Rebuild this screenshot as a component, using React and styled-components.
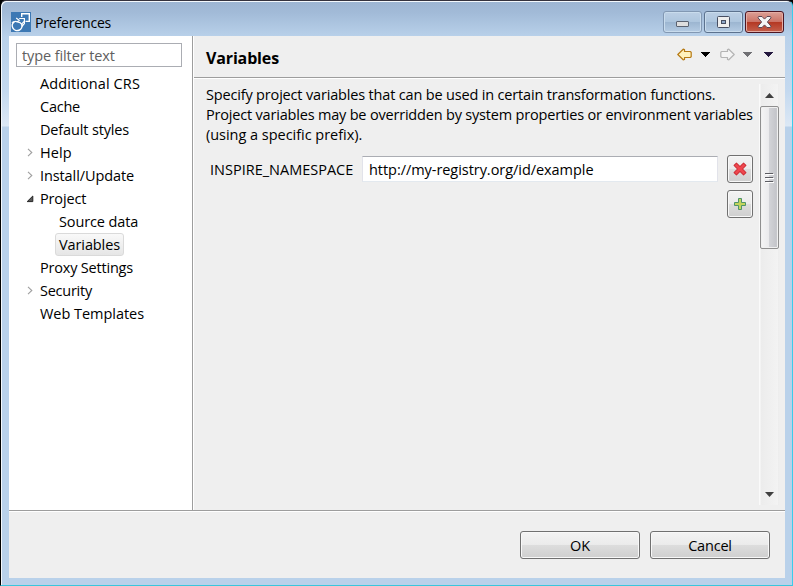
import React from "react";
import styled, { createGlobalStyle } from "styled-components";

const Global = createGlobalStyle`
  *, *::before, *::after { box-sizing: border-box; }
  html, body { margin: 0; padding: 0; overflow: hidden; background: #000; }
  body, button, input { font-family: "Open Sans", "Noto Sans", sans-serif; font-size: 14.5px; color: #000; }
  svg { display: block; flex: none; }
`;

const Text = styled.span`
  display: block;
  white-space: nowrap;
  letter-spacing: ${(p) => p.$ls ?? -0.3}px;
`;

const Window = styled.div`
  width: 793px;
  height: 586px;
  display: flex;
  flex-direction: column;
  padding: 0 7px 7px 7px;
  border: solid;
  border-width: 1px 1px 1px 1px;
  border-color: #35323d #3accea #3ac6dc #000;
  border-radius: 6px 6px 0 0;
  background: linear-gradient(#9db5d2 0, #a2bbd8 12px, #b9d1ea 36px, #c4d9ef 90px, #dce8f5 125px, #b9d1ea 126px);
  box-shadow: inset 1px 1px 0 #f4f8fc;
`;

const TitleBar = styled.header`
  height: 35px;
  flex: none;
  display: flex;
  align-items: flex-start;
  padding: 10px 1px 0 3px;
`;

const Title = styled(Text)`
  margin: 2px 0 0 4px;
  line-height: 20px;
  font-size: 14px;
`;

const AppIconFrame = styled.div`
  margin-top: 1px;
`;

const Controls = styled.div`
  display: flex;
  gap: 2px;
  margin-left: auto;
`;

const Control = styled.button`
  width: 39px;
  height: 22px;
  padding: 0;
  display: grid;
  place-items: center;
  border: 1px solid ${(p) => (p.$close ? "#4d1622" : p.$dim ? "#8298b3" : "#5c728e")};
  border-radius: 3px;
  background: ${(p) =>
    p.$close
      ? "linear-gradient(#dca096 0, #cc7467 48%, #b43722 50%, #c4604c 100%)"
      : "linear-gradient(#bccfe4 0, #aec6de 48%, #9bb5d0 50%, #b4cbe3 100%)"};
  box-shadow: inset 0 0 0 1px ${(p) => (p.$close ? "#e5ada4" : "#c9dced")};
`;

const MinimizeGlyph = styled.svg`
  margin: 4px 0 0;
`;

const Client = styled.div`
  height: 542px;
  margin-left: 1px;
  display: flex;
  flex-direction: column;
  background: #efefef;
`;

const Main = styled.main`
  height: 475px;
  display: flex;
  border-bottom: 1px solid #9d9d9d;
  box-shadow: 0 1px 0 #fff;
`;

const Sidebar = styled.aside`
  width: 184px;
  flex: none;
  padding: 7px 10px 0 7px;
  background: #fff;
  border-right: 1px solid #9d9d9d;
`;

const Filter = styled.input`
  display: block;
  width: 166px;
  height: 24px;
  padding: 0 0 0 5px;
  border: 1px solid #abadb3;
  background: #fff;
  outline: 0;
  letter-spacing: -0.1px;
  &::placeholder { color: #606060; opacity: 1; }
`;

const Tree = styled.div`
  padding-top: 5px;
`;

const TreeRow = styled.div`
  height: 23px;
  display: flex;
  align-items: center;
  padding-left: ${(p) => p.$level * 19 + 8}px;
`;

const Arrow = styled.span`
  width: 12px;
  padding-right: 1px;
  display: flex;
  justify-content: center;
`;

const TreeLabel = styled(Text)`
  height: 23px;
  line-height: 21px;
  padding: 0 3px;
  border: 1px solid ${(p) => (p.$selected ? "#dadada" : "transparent")};
  border-radius: 3px;
  background: ${(p) => (p.$selected ? "linear-gradient(#f9f9f9, #e6e6e6)" : "none")};
`;

const Page = styled.section`
  flex: 1;
  min-width: 0;
  display: flex;
  flex-direction: column;
  border-left: 1px solid #fff;
`;

const PageHead = styled.div`
  height: 42px;
  flex: none;
  display: flex;
  padding: 0 12px 0 12px;
  border-bottom: 1px solid #9d9d9d;
  box-shadow: 0 1px 0 #fff;
`;

const PageTitle = styled(Text).attrs({ as: "h1" })`
  margin: 0;
  font-size: 16px;
  font-weight: 700;
  line-height: 45px;
`;

const NavTools = styled.div`
  margin: 11px 0 0 auto;
  height: 14px;
  display: flex;
  align-items: center;
`;

const PageBody = styled.div`
  flex: 1;
  display: flex;
  padding: 6px 6px 5px 12px;
`;

const Form = styled.div`
  width: 553px;
  flex: none;
`;

const Description = styled.div`
  padding-top: 1px;
  line-height: 20px;
`;

const VariableRow = styled.div`
  display: flex;
  align-items: center;
  height: 28px;
  margin-top: 10px;
  padding-left: 4px;
`;

const VariableName = styled(Text)`
  width: 152px;
`;

const ValueInput = styled.input`
  width: 356px;
  height: 26px;
  padding: 0 6px;
  border: 1px solid;
  border-color: #abadb3 #e2e3ea #e3e9ef #e2e3ea;
  background: #fff;
  outline: 0;
  letter-spacing: ${(p) => p.$ls}px;
`;

const Button = styled.button`
  width: ${(p) => p.$w}px;
  height: 28px;
  padding: 0;
  display: grid;
  place-items: center;
  border: 1px solid #707070;
  border-radius: 3px;
  background: linear-gradient(#f3f3f3 0, #ebebeb 48%, #dddddd 50%, #cfcfcf 100%);
  box-shadow: inset 0 0 0 1px #f8f8f8;
`;

const RemoveButton = styled(Button)`
  margin-left: 9px;
`;

const AddRow = styled.div`
  display: flex;
  justify-content: flex-end;
  padding: 7px 6px 0 0;
`;

const Scrollbar = styled.div`
  width: 20px;
  display: flex;
  flex-direction: column;
  align-items: center;
  background: linear-gradient(90deg, #fafafa 0, #fafafa 1px, #ececec 2px, #f3f3f3 19px, #e8e8e8 20px);
`;

const ScrollStep = styled.div`
  width: 18px;
  height: ${(p) => p.$h}px;
  display: grid;
  place-items: center;
`;

const Thumb = styled.div`
  width: 19px;
  height: 143px;
  display: grid;
  place-items: center;
  border: 1px solid #8f8f8f;
  border-radius: 2px;
  background: linear-gradient(90deg, #f5f5f5 0, #ebebed 44%, #d2d3d7 50%, #c4c5ca 90%, #dedede 100%);
  box-shadow: inset 0 0 0 1px #f0f0f0;
`;

const Footer = styled.footer`
  flex: 1;
  display: flex;
  justify-content: flex-end;
  gap: 10px;
  padding: 20px 15px 0 0;
`;

const CaretSvg = styled.svg`
  margin-left: ${(p) => p.$gap}px;
`;

const Caret = ({ color, gap }) => (
  <CaretSvg $gap={gap} width="9" height="5" viewBox="0 0 9 5">
    <path d="M0 0H9V1H8V2H7V3H6V4H5V5H4V4H3V3H2V2H1V1H0Z" fill={color} />
  </CaretSvg>
);

const NavArrow = ({ flip, stroke, fill, gap }) => (
  <CaretSvg $gap={gap} width="15" height="13" viewBox="0 0 15 13">
    <path
      transform={flip ? "translate(15 0) scale(-1 1)" : undefined}
      d="M.8 6.5 6.2 1.2 7.5 1.5V3.5H13.2L14.2 4.2V8.8L13.2 9.5H7.5V11.5L6.2 11.8Z"
      fill={fill}
      stroke={stroke}
      strokeWidth="1.2"
      strokeLinejoin="round"
    />
  </CaretSvg>
);

const AppIcon = () => (
  <svg width="20" height="20" viewBox="0 0 20 20">
    <rect width="20" height="20" fill="#3c78b4" />
    <path d="M10.7 5V1.7H18.3V9.4H14.5" fill="none" stroke="#fff" strokeWidth="1.4" />
    <path d="M3.4 9.6A4.9 4.9 0 1 0 10.8 12.2" fill="none" stroke="#fff" strokeWidth="1.5" />
    <path d="M.8 10.5 4.6 9.3 9 10.6 11.2 12.8M5.2 6 8.2 8.3 6 10M8.2 6.5H13.4V11.6L10.8 14.5M13.4 9.2 10.6 12.2" fill="none" stroke="#fff" strokeWidth="1.2" />
  </svg>
);

const Collapsed = () => (
  <svg width="6" height="9" viewBox="0 0 6 9">
    <path d="M1 .8 4.8 4.5 1 8.2" fill="none" stroke="#a0a0a0" strokeWidth="1.1" />
  </svg>
);

const Expanded = () => (
  <svg width="8" height="8" viewBox="0 0 8 8">
    <path d="M6.8 1V6.6H1.2Z" fill="#595959" stroke="#262626" />
  </svg>
);

const TREE = [
  { label: "Additional CRS", level: 0, ls: 0.1 },
  { label: "Cache", level: 0, ls: -0.25 },
  { label: "Default styles", level: 0, ls: -0.15 },
  { label: "Help", level: 0, ls: 0.1, icon: Collapsed },
  { label: "Install/Update", level: 0, ls: -0.1, icon: Collapsed },
  { label: "Project", level: 0, ls: -0.15, icon: Expanded },
  { label: "Source data", level: 1, ls: -0.12 },
  { label: "Variables", level: 1, ls: -0.1, selected: true },
  { label: "Proxy Settings", level: 0, ls: -0.2 },
  { label: "Security", level: 0, ls: -0.25, icon: Collapsed },
  { label: "Web Templates", level: 0, ls: -0.04 },
];

export default function App() {
  return (
    <>
      <Global />
      <Window>
        <TitleBar>
          <AppIconFrame><AppIcon /></AppIconFrame>
          <Title $ls={-0.17}>Preferences</Title>
          <Controls>
            <Control $dim aria-label="Minimize">
              <MinimizeGlyph width="13" height="6" viewBox="0 0 13 6">
                <rect x=".5" y=".5" width="12" height="5" rx=".5" fill="#dedede" stroke="#5b6270" />
              </MinimizeGlyph>
            </Control>
            <Control aria-label="Maximize">
              <svg width="13" height="12" viewBox="0 0 13 12">
                <rect x=".5" y=".5" width="12" height="11" rx="1" fill="#eee" stroke="#474e61" />
                <rect x="4.5" y="4.5" width="4" height="3" fill="#8ea8c8" stroke="#474e61" />
              </svg>
            </Control>
            <Control $close aria-label="Close">
              <svg width="15" height="12" viewBox="0 0 15 12">
                <path d="M1.6.5H5L7.5 3.1 10 .5H13.4L14 1.8 10.4 6 14 10.2 13.4 11.5H10L7.5 8.9 5 11.5H1.6L1 10.2 4.6 6 1 1.8Z" fill="#f5f5f5" stroke="#5b4653" strokeLinejoin="round" />
              </svg>
            </Control>
          </Controls>
        </TitleBar>
        <Client>
          <Main>
            <Sidebar>
              <Filter placeholder="type filter text" />
              <Tree>
                {TREE.map(({ label, level, ls, icon: Icon, selected }) => (
                  <TreeRow key={label} $level={level}>
                    <Arrow>{Icon && <Icon />}</Arrow>
                    <TreeLabel $ls={ls} $selected={selected}>{label}</TreeLabel>
                  </TreeRow>
                ))}
              </Tree>
            </Sidebar>
            <Page>
              <PageHead>
                <PageTitle $ls={-0.15}>Variables</PageTitle>
                <NavTools>
                  <NavArrow stroke="#b67a14" fill="#fff2bd" gap={0} />
                  <Caret color="#000" gap={9} />
                  <NavArrow flip stroke="#b4b4b4" fill="#f4f4f4" gap={10} />
                  <Caret color="#707074" gap={8} />
                  <Caret color="#24183f" gap={12} />
                </NavTools>
              </PageHead>
              <PageBody>
                <Form>
                  <Description>
                    <Text $ls={-0.17}>Specify project variables that can be used in certain transformation functions.</Text>
                    <Text $ls={-0.19}>Project variables may be overridden by system properties or environment variables</Text>
                    <Text $ls={-0.03}>(using a specific prefix).</Text>
                  </Description>
                  <VariableRow>
                    <VariableName $ls={0}>INSPIRE_NAMESPACE</VariableName>
                    <ValueInput $ls={-0.05} defaultValue="http://my-registry.org/id/example" />
                    <RemoveButton $w={26} aria-label="Remove">
                      <svg width="14" height="14" viewBox="0 0 13 13">
                        <path d="M3.2 1 6.5 4.2 9.8 1 12 3.2 8.8 6.5 12 9.8 9.8 12 6.5 8.8 3.2 12 1 9.8 4.2 6.5 1 3.2Z" fill="#f0474f" stroke="#cf3037" strokeLinejoin="round" />
                      </svg>
                    </RemoveButton>
                  </VariableRow>
                  <AddRow>
                    <Button $w={26} aria-label="Add">
                      <svg width="12" height="12" viewBox="0 0 12 12">
                        <path d="M4.5.5H7.5V4.5H11.5V7.5H7.5V11.5H4.5V7.5H.5V4.5H4.5Z" fill="#c3d45c" stroke="#4f9468" />
                      </svg>
                    </Button>
                  </AddRow>
                </Form>
                <Scrollbar>
                  <ScrollStep $h={22}>
                    <svg width="9" height="5" viewBox="0 0 9 5"><path d="M0 5 4.5 0 9 5Z" fill="#404040" /></svg>
                  </ScrollStep>
                  <Thumb>
                    <svg width="9" height="11" viewBox="0 0 9 11">
                      <path d="M0 1.5H8M0 5.5H8M0 9.5H8" stroke="#5c5c62" />
                      <path d="M1 2.5H9M1 6.5H9M1 10.5H9" stroke="#fff" />
                    </svg>
                  </Thumb>
                  <ScrollStep $h={235} />
                  <ScrollStep $h={20}>
                    <svg width="9" height="5" viewBox="0 0 9 5"><path d="M0 0 4.5 5 9 0Z" fill="#404040" /></svg>
                  </ScrollStep>
                </Scrollbar>
              </PageBody>
            </Page>
          </Main>
          <Footer>
            <Button $w={120}><Text $ls={-0.2}>OK</Text></Button>
            <Button $w={120}><Text $ls={-0.2}>Cancel</Text></Button>
          </Footer>
        </Client>
      </Window>
    </>
  );
}
